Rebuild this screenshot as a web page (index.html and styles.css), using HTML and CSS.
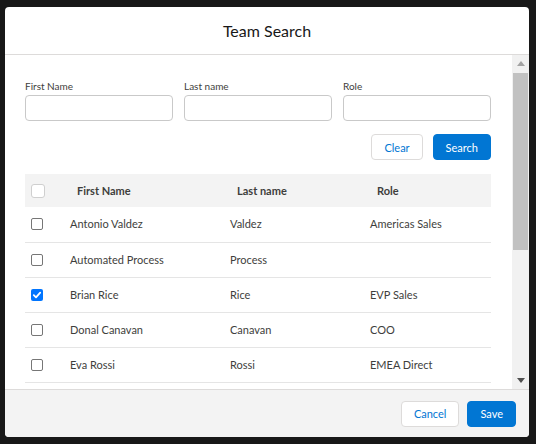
FILE: index.html
```html
<!DOCTYPE html>
<html lang="en">
  <head>
    <meta charset="UTF-8" />
    <title>Team Search</title>
    <link rel="stylesheet" href="styles.css">
  </head>
  <body>
    <section class="modal">
      <header class="modal-header">
        <h2>Team Search</h2>
      </header>

      <div class="modal-body">
        <div class="body-content">
          <div class="filters">
            <label class="field">
              <span class="field-label">First Name</span>
              <input class="input" type="text" />
            </label>
            <label class="field">
              <span class="field-label">Last name</span>
              <input class="input" type="text" />
            </label>
            <label class="field">
              <span class="field-label">Role</span>
              <input class="input" type="text" />
            </label>
          </div>

          <div class="actions">
            <button class="btn">Clear</button>
            <button class="btn brand">Search</button>
          </div>

          <table class="results">
            <thead>
              <tr>
                <th class="col-check"><span class="cb cb-head"></span></th>
                <th class="col-first">First Name</th>
                <th class="col-last">Last name</th>
                <th>Role</th>
              </tr>
            </thead>
            <tbody>
              <tr>
                <td class="col-check"><span class="cb"></span></td>
                <td>Antonio Valdez</td>
                <td>Valdez</td>
                <td>Americas Sales</td>
              </tr>
              <tr>
                <td class="col-check"><span class="cb"></span></td>
                <td>Automated Process</td>
                <td>Process</td>
                <td></td>
              </tr>
              <tr>
                <td class="col-check">
                  <span class="cb checked">
                    <svg viewBox="0 0 12 12" width="12" height="12">
                      <path d="M2.8 6.2 L5 8.3 L9.2 3.6" fill="none" stroke="#fff" stroke-width="1.8" stroke-linecap="round" stroke-linejoin="round" />
                    </svg>
                  </span>
                </td>
                <td>Brian Rice</td>
                <td>Rice</td>
                <td>EVP Sales</td>
              </tr>
              <tr>
                <td class="col-check"><span class="cb"></span></td>
                <td>Donal Canavan</td>
                <td>Canavan</td>
                <td>COO</td>
              </tr>
              <tr>
                <td class="col-check"><span class="cb"></span></td>
                <td>Eva Rossi</td>
                <td>Rossi</td>
                <td>EMEA Direct</td>
              </tr>
            </tbody>
          </table>
        </div>

        <!-- classic scrollbar look (track, arrows, thumb) -->
        <div class="scrollbar">
          <span class="sb-arrow">
            <svg viewBox="0 0 8 5" width="8" height="5"><path d="M0 5 L4 0 L8 5 Z" fill="#a3a3a3" /></svg>
          </span>
          <span class="sb-thumb"></span>
          <span class="sb-arrow down">
            <svg viewBox="0 0 8 5" width="8" height="5"><path d="M0 0 L8 0 L4 5 Z" fill="#505050" /></svg>
          </span>
        </div>
      </div>

      <footer class="modal-footer">
        <button class="btn">Cancel</button>
        <button class="btn brand">Save</button>
      </footer>
    </section>
  </body>
</html>
```

FILE: styles.css
```css
:root {
  --brand: #0176d3;
  --text: #3e3e3c;
  --border: #dddbda;
  --input-border: #c9c9c9;
  --shade: #f3f3f3;
  --font: Lato, "Open Sans", Arial, sans-serif;
}

* {
  box-sizing: border-box;
}

html,
body {
  margin: 0;
  height: 100%;
}

body {
  background: #181818;
  font-family: var(--font);
  font-size: 11px;
  line-height: 1.25;
  color: var(--text);
  padding: 7px 7px 7px 5px;
}

.modal {
  width: 524px;
  height: 430px;
  background: #fff;
  border-radius: 4px;
  display: flex;
  flex-direction: column;
  overflow: hidden;
}

.modal-header {
  height: 48px;
  flex: none;
  display: flex;
  align-items: center;
  justify-content: center;
  border-bottom: 1px solid var(--border);
}

.modal-header h2 {
  margin: 0;
  font-size: 16px;
  font-weight: 400;
  color: #181818;
}

.modal-body {
  flex: 1;
  min-height: 0;
  display: flex;
}

.body-content {
  flex: 1;
  min-width: 0;
  overflow: hidden;
  padding: 24px 21px 0 20px;
}

/* filter inputs */
.filters {
  display: grid;
  grid-template-columns: repeat(3, minmax(0, 1fr));
  gap: 11px;
}

.field {
  display: flex;
  flex-direction: column;
  min-width: 0;
}

.field-label {
  font-size: 10px;
  line-height: 14px;
  margin-bottom: 2px;
}

.input {
  width: 100%;
  min-width: 0;
  height: 26px;
  border: 1px solid var(--input-border);
  border-radius: 4px;
  font: inherit;
  padding: 0 8px;
}

.actions {
  display: flex;
  justify-content: flex-end;
  gap: 10px;
  margin-top: 13px;
}

.btn {
  height: 26px;
  padding: 0 12px;
  font-family: var(--font);
  font-size: 11px;
  border: 1px solid var(--border);
  border-radius: 4px;
  background: #fff;
  color: var(--brand);
  cursor: pointer;
}

.btn.brand {
  background: var(--brand);
  border-color: var(--brand);
  color: #fff;
}

/* results table */
.results {
  width: 100%;
  margin-top: 14px;
  border-collapse: collapse;
  table-layout: fixed;
}

.results th,
.results td {
  text-align: left;
  padding: 0 0 0 7px;
  border-bottom: 1px solid #e5e5e5;
}

.results th {
  height: 33px;
  background: var(--shade);
  font-weight: 700;
  padding-left: 14px;
  border-bottom: none;
}

.results td {
  height: 35px;
}

.results .col-check {
  width: 38px;
  padding-left: 6px;
}

.results .col-first {
  width: 160px;
}

.results .col-last {
  width: 140px;
}

.cb {
  display: block;
  width: 12px;
  height: 12px;
  border: 1px solid #767676;
  border-radius: 2px;
  background: #fff;
}

.cb.checked {
  border: none;
  background: #0075ff;
}

.cb svg {
  display: block;
}

.cb-head {
  width: 14px;
  height: 14px;
  border-color: #cfcfcf;
  border-radius: 3px;
}

/* fake scrollbar */
.scrollbar {
  width: 17px;
  flex: none;
  background: #f1f1f1;
  display: flex;
  flex-direction: column;
  align-items: center;
}

.sb-arrow {
  height: 17px;
  width: 100%;
  display: flex;
  align-items: center;
  justify-content: center;
}

.sb-arrow svg {
  display: block;
}

.sb-arrow.down {
  margin-top: auto;
}

.sb-thumb {
  width: 15px;
  height: 177px;
  margin-top: 1px;
  background: #c1c1c1;
}

.modal-footer {
  height: 48px;
  flex: none;
  display: flex;
  justify-content: flex-end;
  align-items: center;
  gap: 8px;
  padding: 0 13px;
  background: var(--shade);
  border-top: 1px solid var(--border);
}
```
